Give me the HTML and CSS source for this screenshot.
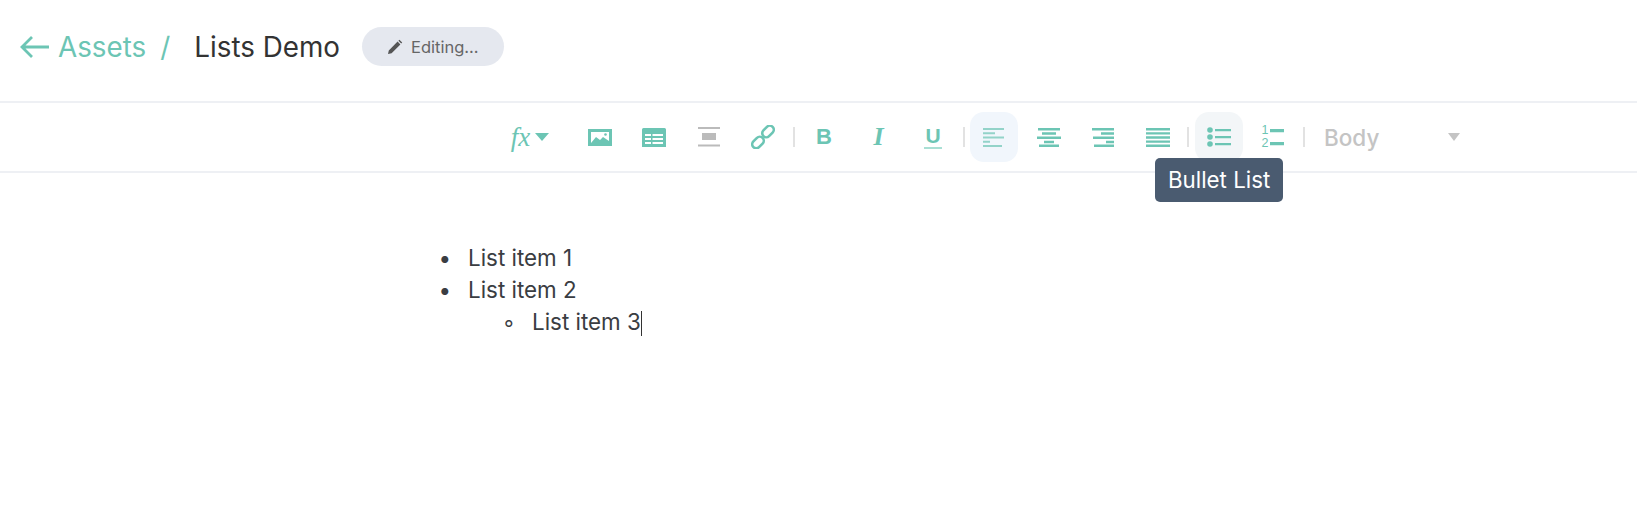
FILE: index.html
```html
<!DOCTYPE html>
<html lang="en">
<head>
  <meta charset="UTF-8">
  <meta name="viewport" content="width=device-width, initial-scale=1.0">
  <title>Lists Demo</title>
  <link rel="stylesheet" href="styles.css">
</head>
<body>
  <!-- title bar -->
  <header class="topbar">
    <a class="back" href="#">
      <svg class="back-arrow" width="30" height="24" viewBox="0 0 30 24"><path d="M12 2 2 12l10 10M2 12h27" fill="none" stroke="currentColor" stroke-width="2.8"/></svg>
      Assets
    </a>
    <span class="slash">/</span>
    <span class="doc-title">Lists Demo</span>
    <span class="status">
      <svg width="16" height="16" viewBox="0 0 16 16"><path d="M1 15l.8-3.6L10.6 2.6l2.8 2.8-8.800 8.800zM11.400 1.800l1-1 2.800 2.800-1 1z" fill="#555"/></svg>
      Editing...
    </span>
  </header>

  <!-- toolbar -->
  <div class="toolbar">
    <button class="tool tool-fx"><span class="fx">fx</span><span class="caret"></span></button>
    <button class="tool">
      <svg width="24" height="18" viewBox="0 0 24 18"><path d="M0 1h24v17H0z" fill="#6cc5b4"/><path d="M3 4h18v11H3z" fill="#fff"/><path d="M3 15l5-6 4 3 3-3 6 4v2z" fill="#6cc5b4"/><circle cx="17.500" cy="6.500" r="1.300" fill="#6cc5b4"/></svg>
    </button>
    <button class="tool">
      <svg width="24" height="19" viewBox="0 0 24 19"><path d="M1.500 0h21A1.500 1.500 0 0 1 24 1.500V19H0V1.500A1.500 1.500 0 0 1 1.500 0z" fill="#6cc5b4"/><path d="M3 6h18v2H3zM3 10h18v2H3zM3 14h18v2H3z" fill="#fff"/><path d="M9 6h1.500v10H9z" fill="#6cc5b4"/></svg>
    </button>
    <button class="tool">
      <svg width="22" height="20" viewBox="0 0 22 20"><path d="M0 0h22v2H0zM0 17.500h22v2H0z" fill="#bbb"/><path d="M4 6h14v7H4z" fill="#bbb"/></svg>
    </button>
    <button class="tool">
      <svg width="24" height="24" viewBox="0 0 24 24" fill="none" stroke="#6cc5b4" stroke-width="2.600"><rect x="10.500" y="2.500" width="13" height="8" rx="4" transform="rotate(-45 17 6.500)"/><rect x="0.500" y="13.500" width="13" height="8" rx="4" transform="rotate(-45 7 17.500)"/></svg>
    </button>
    <span class="sep"></span>
    <button class="tool"><span class="glyph-b">B</span></button>
    <button class="tool"><span class="glyph-i">I</span></button>
    <button class="tool"><span class="glyph-u">U</span></button>
    <span class="sep"></span>
    <button class="tool tool-on tool-soft">
      <svg width="22" height="19" viewBox="0 0 22 19" fill="#6cc5b4"><path d="M0 0h21v2H0zM0 4.300h12v2H0zM0 8.500h21v2H0zM0 12.800h7v2H0zM0 17h19v2H0z"/></svg>
    </button>
    <button class="tool">
      <svg width="24" height="19" viewBox="0 0 24 19" fill="#6cc5b4"><path d="M1 0h22v2.400H1zM5 4.300h14v2.400H5zM0 8.500h24v2.400H0zM7 12.800h10v2.400H7zM2 16.600h20V19H2z"/></svg>
    </button>
    <button class="tool">
      <svg width="24" height="19" viewBox="0 0 24 19" fill="#6cc5b4"><path d="M1 0h22v2.400H1zM10 4.300h13v2.400H10zM2 8.500h21v2.400H2zM15 12.800h8v2.400h-8zM3 16.600h20V19H3z"/></svg>
    </button>
    <button class="tool">
      <svg width="24" height="19" viewBox="0 0 24 19" fill="#6cc5b4"><path d="M0 0h24v2.400H0zM0 4.150h24v2.400H0zM0 8.300h24v2.400H0zM0 12.450h24v2.400H0zM0 16.600h24V19H0z"/></svg>
    </button>
    <span class="sep"></span>
    <button class="tool tool-on">
      <svg width="24" height="20" viewBox="0 0 24 20" fill="#6cc5b4"><circle cx="3" cy="3" r="2.800"/><circle cx="3" cy="10" r="2.800"/><circle cx="3" cy="17" r="2.800"/><path d="M8 2h16v2.200H8zM8 9h16v2.200H8zM8 16h16v2.200H8z"/></svg>
    </button>
    <button class="tool tool-num">
      <span class="nums"><span>1</span><span>2</span></span>
      <svg width="14" height="18" viewBox="0 0 14 18" fill="#6cc5b4"><path d="M0 1h14v3.200H0zM0 14h14v3.200H0z"/></svg>
    </button>
    <span class="sep"></span>
    <div class="style-select">
      <span>Body</span>
      <span class="caret caret-grey"></span>
    </div>
    <div class="tooltip">Bullet List</div>
  </div>

  <!-- editor -->
  <main class="editor">
    <ul>
      <li>List item 1</li>
      <li>List item 2
        <ul>
          <li>List item 3<span class="cursor"></span></li>
        </ul>
      </li>
    </ul>
  </main>
</body>
</html>
```

FILE: styles.css
```css
body {
  font-family: 'Inter', 'Liberation Sans', sans-serif;
  background-color: #fff;
  color: #333;
  margin: 0;
}
.topbar {
  display: flex;
  align-items: center;
  height: 103px;
  padding-left: 20px;
  padding-bottom: 8px;
  box-sizing: border-box;
  border-bottom: 2px solid #eef0f4;
  font-size: 27.800px;
}
.back {
  display: flex;
  align-items: center;
  gap: 8px;
  color: #6cc5b4;
  text-decoration: none;
}
.slash {
  color: #6cc5b4;
  margin-left: 14px;
}
.doc-title {
  margin-left: 24px;
  color: #333;
}
.status {
  display: flex;
  align-items: center;
  gap: 8px;
  margin-left: 22px;
  height: 39px;
  padding: 0 25px;
  border-radius: 20px;
  background-color: #e5e8ef;
  color: #666;
  font-size: 16.500px;
}
.toolbar {
  position: relative;
  display: flex;
  align-items: center;
  gap: 6.500px;
  height: 68px;
  padding-left: 505px;
  border-bottom: 2px solid #eef0f4;
}
.tool {
  display: flex;
  align-items: center;
  justify-content: center;
  width: 48px;
  height: 50px;
  padding: 0;
  border: none;
  border-radius: 14px;
  background: none;
  color: #6cc5b4;
  cursor: pointer;
}
.tool-fx {
  gap: 5px;
  width: 50px;
  margin-right: 14px;
}
.tool-on {
  background-color: #f3f6f8;
}
.tool-soft {
  background-color: #f1f6fc;
}
.tool-soft svg {
  opacity: 0.7;
}
.tool-num {
  gap: 2px;
}
.nums {
  display: flex;
  flex-direction: column;
  font-size: 12.500px;
  line-height: 13px;
}
.fx {
  font-family: 'Liberation Serif', serif;
  font-style: italic;
  font-size: 27px;
  line-height: 1;
}
.caret {
  width: 0;
  height: 0;
  border-left: 7px solid transparent;
  border-right: 7px solid transparent;
  border-top: 8px solid #6cc5b4;
}
.caret-grey {
  border-left-width: 6px;
  border-right-width: 6px;
  border-top-color: #c4c4c4;
}
.glyph-b {
  font-size: 22px;
  font-weight: 900;
}
.glyph-i {
  font-family: 'Liberation Serif', serif;
  font-style: italic;
  font-weight: 700;
  font-size: 26px;
}
.glyph-u {
  font-size: 21px;
  font-weight: 600;
  line-height: 22px;
  border-bottom: 2px solid #a9dfd4;
  padding: 0 1px;
}
.sep {
  width: 2px;
  height: 20px;
  margin: 0 -1px;
  background-color: #e2e2e2;
}
.style-select {
  display: flex;
  align-items: center;
  justify-content: space-between;
  width: 136px;
  margin-left: 14px;
  color: #c4c4c4;
  font-size: 22.500px;
  font-weight: 500;
}
.tooltip {
  position: absolute;
  left: 1155px;
  top: 55px;
  padding: 8px 13px;
  border-radius: 5px;
  background-color: #4a5b70;
  color: #fff;
  font-size: 22.300px;
  line-height: 28px;
}
.editor {
  padding: 69px 0 0 404px;
  color: #3a3d42;
  font-size: 22.400px;
  line-height: 32px;
}
.editor ul {
  margin: 0;
  padding-left: 64px;
}
.editor li::marker {
  content: "\2022\2002\2005";
}
.editor ul ul li::marker {
  content: "\25E6\2002\2005";
}
.cursor {
  display: inline-block;
  width: 1px;
  height: 25px;
  vertical-align: -6px;
  background-color: #333;
}
```
